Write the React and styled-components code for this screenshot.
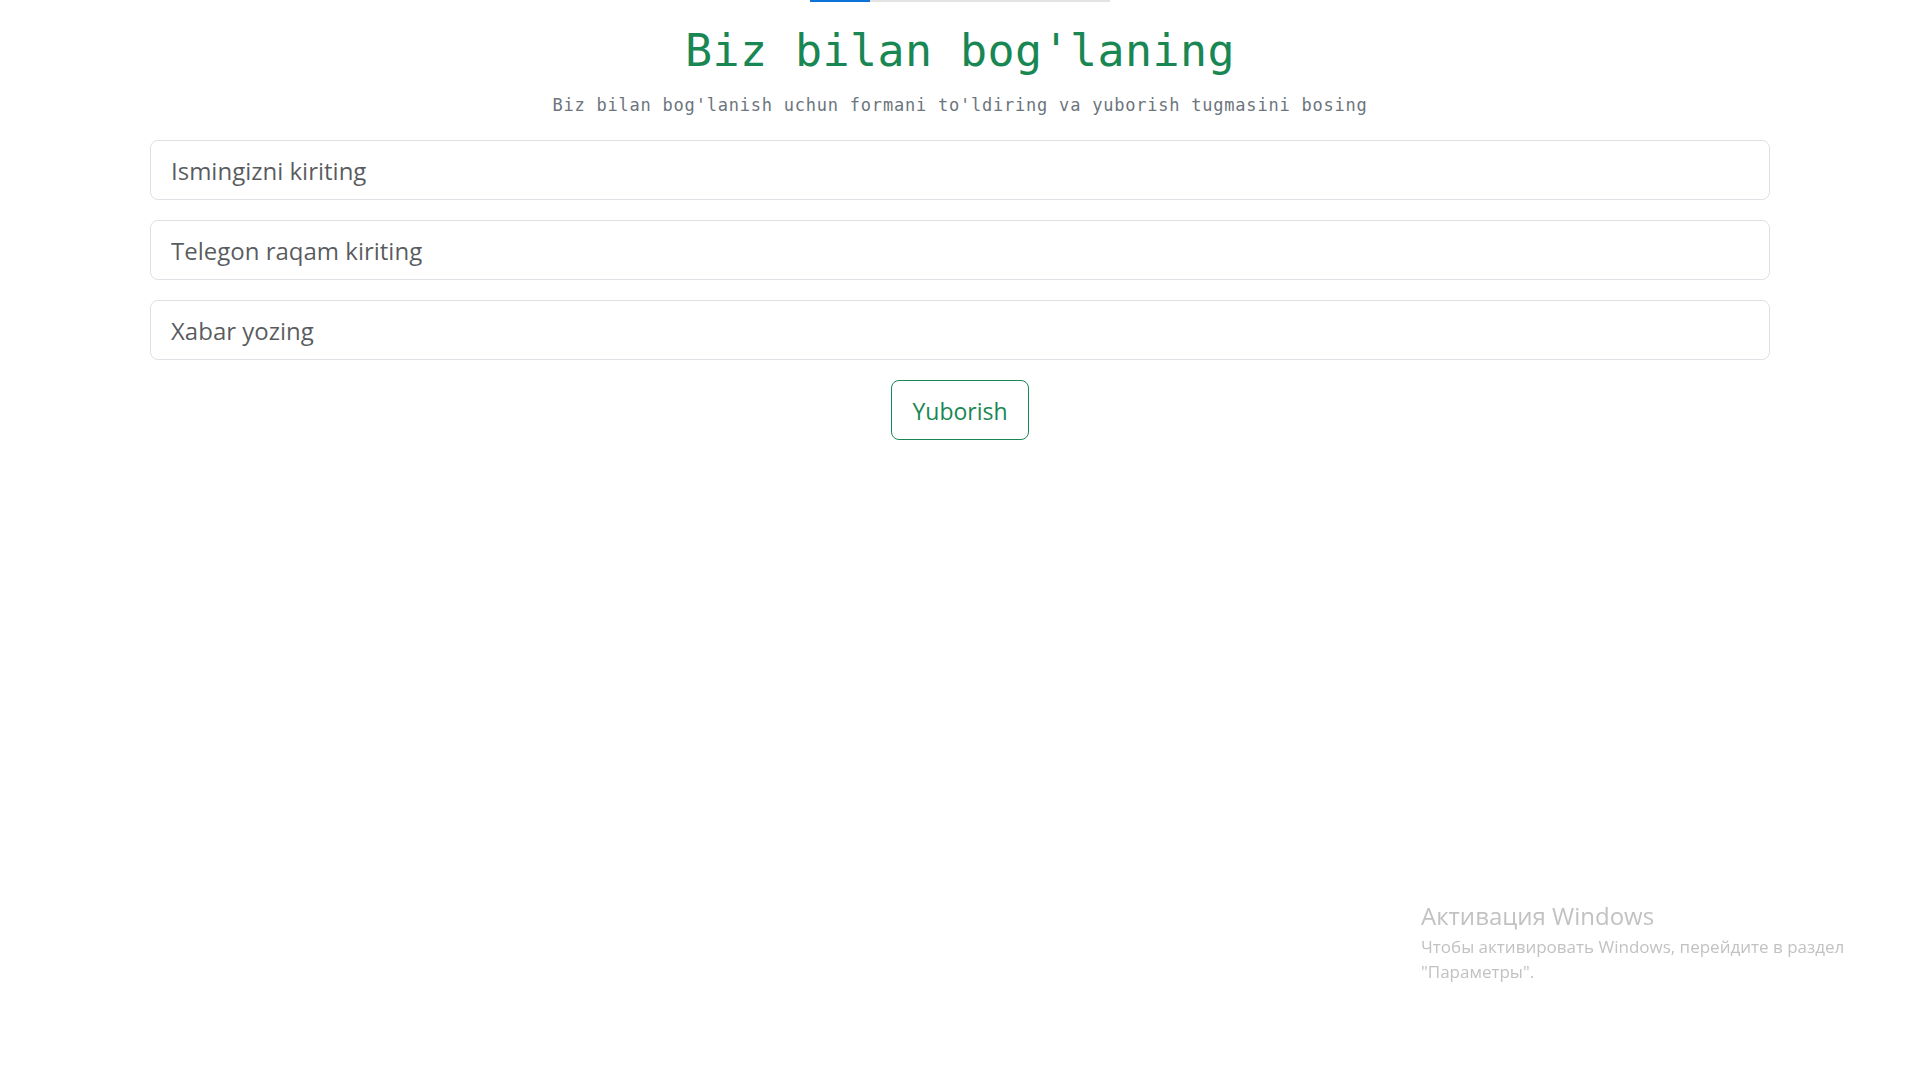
import React from "react";
import styled, { createGlobalStyle } from "styled-components";

const GlobalStyle = createGlobalStyle`
  * { box-sizing: border-box; }
  html, body { margin: 0; padding: 0; background: #ffffff; }
  body { font-family: "Open Sans", "Noto Sans", sans-serif; color: #212529; }
`;

const Page = styled.main`
  min-height: 1080px;
  display: flex;
  flex-direction: column;
  align-items: center;
  padding: 0 150px;
`;

const TopBar = styled.div`
  width: 300px;
  height: 2px;
  display: flex;
  background: #e3e3e3;
`;

const TopBarFill = styled.div`
  width: ${(p) => p.$width}px;
  background: #0a74da;
`;

const Title = styled.h1`
  margin: 22px 0 15px;
  font-family: "DejaVu Sans Mono", "Liberation Mono", monospace;
  font-weight: 400;
  font-size: 45px;
  line-height: 54px;
  letter-spacing: 0.4px;
  color: #198754;
  text-align: center;
`;

const Subtitle = styled.p`
  margin: 0 0 21px;
  font-family: "DejaVu Sans Mono", "Liberation Mono", monospace;
  font-size: 17px;
  line-height: 25.5px;
  letter-spacing: 0.78px;
  color: #6c757d;
  text-align: center;
`;

const Form = styled.form`
  width: 100%;
  display: flex;
  flex-direction: column;
  align-items: center;
  gap: 20px;
`;

const Field = styled.input`
  width: 100%;
  height: 60px;
  padding: 12px 20px 10px;
  font-family: "Open Sans", "Noto Sans", sans-serif;
  font-size: 24px;
  line-height: 36px;
  color: #212529;
  background: #ffffff;
  border: 1px solid #dee2e6;
  border-radius: 8px;
  outline: none;
  &::placeholder {
    color: rgba(33, 37, 41, 0.75);
    opacity: 1;
  }
`;

const SubmitButton = styled.button`
  height: 60px;
  padding: 12px 20px 10px;
  font-family: "Open Sans", "Noto Sans", sans-serif;
  font-size: 23px;
  line-height: 36px;
  color: #198754;
  background: #ffffff;
  border: 1px solid #198754;
  border-radius: 8px;
  cursor: pointer;
`;

const Watermark = styled.div`
  position: fixed;
  left: 1421px;
  top: 897px;
  font-family: "Open Sans", "Noto Sans", sans-serif;
  color: #c2c2c2;
  pointer-events: none;
`;

const WatermarkTitle = styled.div`
  font-size: 24px;
  font-weight: 400;
  line-height: 37px;
`;

const WatermarkText = styled.div`
  font-size: 17px;
  line-height: 25px;
  font-weight: 400;
`;

export default function App() {
  return (
    <>
      <GlobalStyle />
      <Page>
        <TopBar>
          <TopBarFill $width={60} />
        </TopBar>
        <Title>Biz bilan bog'laning</Title>
        <Subtitle>
          Biz bilan bog'lanish uchun formani to'ldiring va yuborish tugmasini bosing
        </Subtitle>
        <Form onSubmit={(e) => e.preventDefault()}>
          <Field type="text" placeholder="Ismingizni kiriting" />
          <Field type="text" placeholder="Telegon raqam kiriting" />
          <Field type="text" placeholder="Xabar yozing" />
          <SubmitButton type="submit">Yuborish</SubmitButton>
        </Form>
      </Page>
      <Watermark>
        <WatermarkTitle>Активация Windows</WatermarkTitle>
        <WatermarkText>Чтобы активировать Windows, перейдите в раздел</WatermarkText>
        <WatermarkText>"Параметры".</WatermarkText>
      </Watermark>
    </>
  );
}
